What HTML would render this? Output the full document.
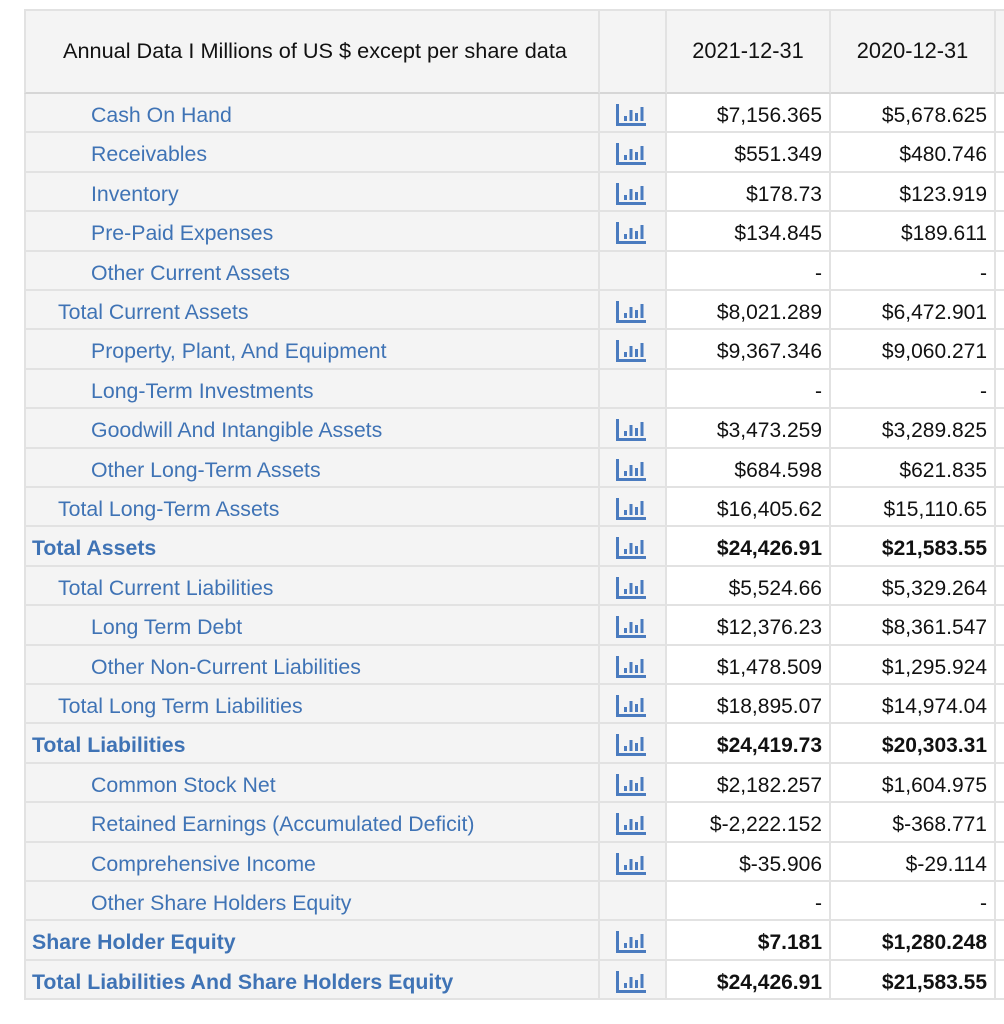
<!DOCTYPE html>
<html><head><style>
body{margin:0;background:#fff;width:1004px;height:1024px;overflow:hidden;font-family:"Liberation Sans",Arial,sans-serif;}
.t{position:absolute;left:24px;top:9px;}
.r{position:absolute;left:0;height:39.4px;width:990px;}
.c{position:absolute;top:0;height:100%;box-sizing:border-box;border-right:2px solid #e2e2e2;border-bottom:2px solid #e2e2e2;}
.l{left:0;width:576px;background:#f4f4f4;border-left:2px solid #e2e2e2;color:#3f73b5;font-size:21.3px;line-height:43px;white-space:nowrap}
.i{left:576px;width:67px;background:#f4f4f4}
.a{left:643px;width:164px;background:#fff;text-align:right;padding-right:7px;font-size:21px;line-height:43px;color:#111}
.b{left:807px;width:165px;background:#fff;text-align:right;padding-right:7px;font-size:21px;line-height:43px;color:#111}
.d{left:972px;width:20px;background:#fff;border-right:none}
.bold{font-weight:bold}
.h .c{background:#f4f4f4;color:#111;border-bottom:2px solid #d6d6d6;border-top:2px solid #e2e2e2}
.h .a,.h .b{text-align:center;padding:0;background:#f4f4f4}
svg{position:absolute;left:15px;top:9px}
</style></head><body>
<div class="t">
<div class="r h" style="top:0;height:85px">
<div class="c l" style="padding-left:37px;color:#111;line-height:80px;font-size:21.7px">Annual Data I Millions of US $ except per share data</div>
<div class="c i"></div>
<div class="c a" style="line-height:80px;font-size:21.8px">2021-12-31</div>
<div class="c b" style="line-height:80px;font-size:21.8px">2020-12-31</div>
<div class="c d" style="background:#f4f4f4"></div>
</div>
<div id="rows"></div>
</div>
<script>
var rows=[
[3,"Cash On Hand",1,"$7,156.365","$5,678.625"],
[3,"Receivables",1,"$551.349","$480.746"],
[3,"Inventory",1,"$178.73","$123.919"],
[3,"Pre-Paid Expenses",1,"$134.845","$189.611"],
[3,"Other Current Assets",0,"-","-"],
[2,"Total Current Assets",1,"$8,021.289","$6,472.901"],
[3,"Property, Plant, And Equipment",1,"$9,367.346","$9,060.271"],
[3,"Long-Term Investments",0,"-","-"],
[3,"Goodwill And Intangible Assets",1,"$3,473.259","$3,289.825"],
[3,"Other Long-Term Assets",1,"$684.598","$621.835"],
[2,"Total Long-Term Assets",1,"$16,405.62","$15,110.65"],
[1,"Total Assets",1,"$24,426.91","$21,583.55"],
[2,"Total Current Liabilities",1,"$5,524.66","$5,329.264"],
[3,"Long Term Debt",1,"$12,376.23","$8,361.547"],
[3,"Other Non-Current Liabilities",1,"$1,478.509","$1,295.924"],
[2,"Total Long Term Liabilities",1,"$18,895.07","$14,974.04"],
[1,"Total Liabilities",1,"$24,419.73","$20,303.31"],
[3,"Common Stock Net",1,"$2,182.257","$1,604.975"],
[3,"Retained Earnings (Accumulated Deficit)",1,"$-2,222.152","$-368.771"],
[3,"Comprehensive Income",1,"$-35.906","$-29.114"],
[3,"Other Share Holders Equity",0,"-","-"],
[1,"Share Holder Equity",1,"$7.181","$1,280.248"],
[1,"Total Liabilities And Share Holders Equity",1,"$24,426.91","$21,583.55"]];
var ic='<svg width="32" height="24" viewBox="0 0 32 24"><rect x="1" y="1" width="3" height="22" fill="#4a7bbf"/><rect x="1" y="20" width="30" height="3" fill="#4a7bbf"/><rect x="9" y="13" width="3" height="5" fill="#4a7bbf"/><rect x="14.5" y="7" width="3" height="11" fill="#4a7bbf"/><rect x="20" y="10" width="3" height="8" fill="#4a7bbf"/><rect x="25.5" y="4" width="3" height="14" fill="#4a7bbf"/></svg>';
var h='';var pad={1:6,2:32,3:65};
rows.forEach(function(r,k){var top=85+k*39.4;var bc=r[0]==1?' bold':'';
h+='<div class="r" style="top:'+top+'px"><div class="c l'+bc+'" style="padding-left:'+pad[r[0]]+'px">'+r[1]+'</div><div class="c i">'+(r[2]?ic:'')+'</div><div class="c a'+bc+'">'+r[3]+'</div><div class="c b'+bc+'">'+r[4]+'</div><div class="c d"></div></div>';});
document.getElementById('rows').innerHTML=h;
</script>
</body></html>
